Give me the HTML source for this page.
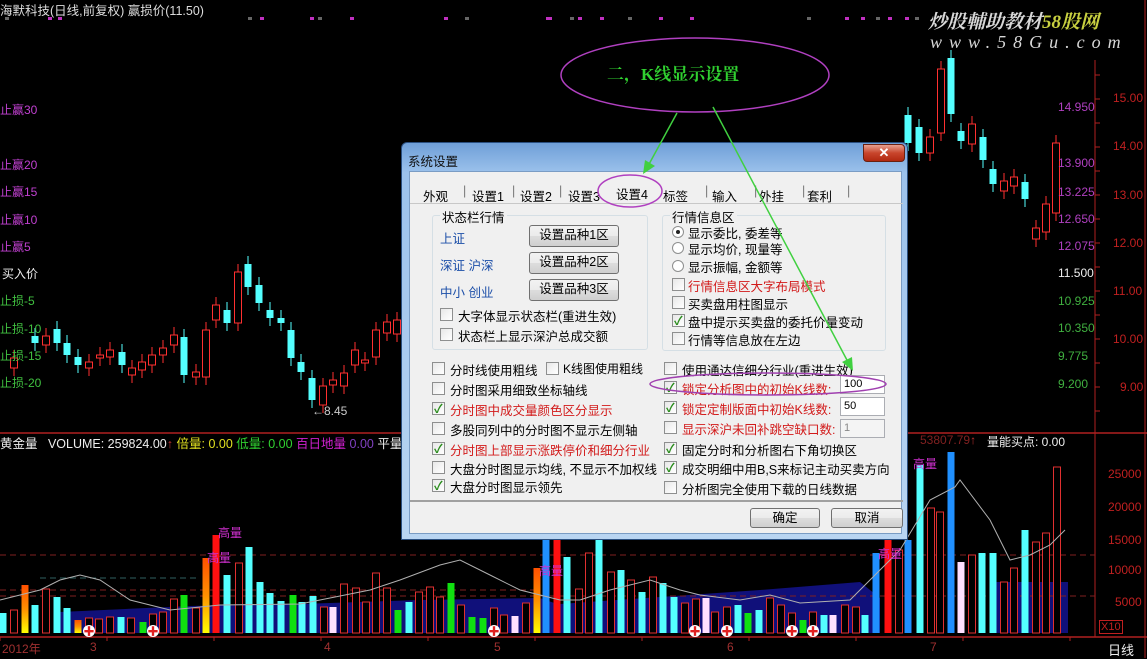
<!DOCTYPE html>
<html><head><meta charset="utf-8">
<style>
*{margin:0;padding:0;box-sizing:border-box}
body{width:1147px;height:658px;background:#000;overflow:hidden;position:relative;font-family:"Liberation Sans","Noto Sans CJK SC",sans-serif;font-size:12px}
.a{position:absolute;white-space:nowrap}
#dlg{position:absolute;left:401px;top:142px;width:507px;height:398px;background:linear-gradient(#6f9fd8,#9cc2ec 30px,#b9d5f2);border:1px solid #2a4f80;border-radius:6px 6px 0 0}
#cl{position:absolute;left:7px;top:28px;width:493px;height:363px;background:#f0f0f0;border:1px solid #7a9cc4}
.t{position:absolute;font-size:12.5px;color:#000;white-space:nowrap;font-family:"Liberation Sans","Noto Sans CJK SC",sans-serif}
.r{color:#d21a1a}
.b{color:#1b4ea8}
.cb{position:absolute;width:13px;height:13px;border:1px solid #8e8f8f;background:linear-gradient(135deg,#e8e8e8,#fff)}
.cb.k::after{content:"✓";position:absolute;left:1px;top:-3px;font-size:12px;color:#2a8c1c;font-weight:bold}
.rd{position:absolute;width:12px;height:12px;border:1px solid #8e8f8f;border-radius:50%;background:#fff}
.rd.k::after{content:"";position:absolute;left:3px;top:3px;width:4px;height:4px;border-radius:50%;background:#222}
.btn{position:absolute;border:1px solid #707070;border-radius:3px;background:linear-gradient(#f2f2f2,#ebebeb 50%,#dddddd 51%,#cfcfcf);text-align:center;font-size:12.5px;line-height:19px}
.grp{position:absolute;border:1px solid #d5dfe5;border-radius:3px}
.gt{position:absolute;top:-9px;left:7px;background:#f0f0f0;padding:0 2px;font-size:12.5px}
.inp{position:absolute;border:1px solid #abadb3;background:#fff;font-size:11px;padding-left:3px;line-height:17px}
</style></head><body>
<svg id="s" width="1147" height="658" style="position:absolute;left:0;top:0"></svg>

<div class="a" style="left:0;top:0;color:#ddd;font-size:12.5px">海默科技(日线,前复权) 赢损价(11.50)</div>
<div class="a" style="left:0;top:101px;color:#c040d0">止赢30</div>
<div class="a" style="left:0;top:156px;color:#c040d0">止赢20</div>
<div class="a" style="left:0;top:183px;color:#c040d0">止赢15</div>
<div class="a" style="left:0;top:211px;color:#c040d0">止赢10</div>
<div class="a" style="left:0;top:238px;color:#c040d0">止赢5</div>
<div class="a" style="left:2px;top:265px;color:#eee">买入价</div>
<div class="a" style="left:0;top:292px;color:#40c040">止损-5</div>
<div class="a" style="left:0;top:320px;color:#40c040">止损-10</div>
<div class="a" style="left:0;top:347px;color:#40c040">止损-15</div>
<div class="a" style="left:0;top:374px;color:#40c040">止损-20</div>
<div class="a" style="left:312px;top:404px;color:#ccc">←8.45</div>

<div class="a" style="left:1058px;top:100px;color:#b040c0">14.950</div>
<div class="a" style="left:1058px;top:156px;color:#b040c0">13.900</div>
<div class="a" style="left:1058px;top:185px;color:#b040c0">13.225</div>
<div class="a" style="left:1058px;top:212px;color:#b040c0">12.650</div>
<div class="a" style="left:1058px;top:239px;color:#b040c0">12.075</div>
<div class="a" style="left:1058px;top:266px;color:#eee">11.500</div>
<div class="a" style="left:1058px;top:294px;color:#40b040">10.925</div>
<div class="a" style="left:1058px;top:321px;color:#40b040">10.350</div>
<div class="a" style="left:1058px;top:349px;color:#40b040">9.775</div>
<div class="a" style="left:1058px;top:377px;color:#40b040">9.200</div>

<div class="a" style="left:1113px;top:91px;color:#c02020">15.00</div>
<div class="a" style="left:1113px;top:139px;color:#c02020">14.00</div>
<div class="a" style="left:1113px;top:188px;color:#c02020">13.00</div>
<div class="a" style="left:1113px;top:236px;color:#c02020">12.00</div>
<div class="a" style="left:1113px;top:284px;color:#c02020">11.00</div>
<div class="a" style="left:1113px;top:332px;color:#c02020">10.00</div>
<div class="a" style="left:1120px;top:380px;color:#c02020">9.00</div>

<div class="a" style="left:1108px;top:467px;color:#c02020">25000</div>
<div class="a" style="left:1108px;top:500px;color:#c02020">20000</div>
<div class="a" style="left:1108px;top:533px;color:#c02020">15000</div>
<div class="a" style="left:1108px;top:563px;color:#c02020">10000</div>
<div class="a" style="left:1115px;top:595px;color:#c02020">5000</div>
<div class="a" style="left:1099px;top:620px;color:#c02020;border:1px solid #c02020;padding:0 1px;font-size:11px">X10</div>
<div class="a" style="left:1108px;top:640px;color:#eee;font-size:13px">日线</div>

<div class="a" style="left:0;top:433px;font-size:12.5px"><span style="color:#eee">黄金量</span>&nbsp;&nbsp;&nbsp;<span style="color:#eee">VOLUME: 259824.00</span><span style="color:#c03030">↑</span> <span style="color:#e0e020">倍量: 0.00</span> <span style="color:#30d030">低量: 0.00</span> <span style="color:#d020d0">百日地量</span> <span style="color:#8040c0">0.00</span> <span style="color:#eee">平量</span></div>
<div class="a" style="left:920px;top:433px;color:#802020">53807.79<span style="color:#c03030">↑</span></div>
<div class="a" style="left:987px;top:433px;color:#eee">量能买点: 0.00</div>

<div class="a" style="left:2px;top:640px;color:#a03030">2012年</div>
<div class="a" style="left:90px;top:640px;color:#a03030">3</div>
<div class="a" style="left:324px;top:640px;color:#a03030">4</div>
<div class="a" style="left:494px;top:640px;color:#a03030">5</div>
<div class="a" style="left:727px;top:640px;color:#a03030">6</div>
<div class="a" style="left:930px;top:640px;color:#a03030">7</div>

<div class="a" style="left:218px;top:524px;color:#d030d0">高量</div>
<div class="a" style="left:207px;top:549px;color:#d030d0">高量</div>
<div class="a" style="left:539px;top:562px;color:#d030d0">高量</div>
<div class="a" style="left:878px;top:545px;color:#d030d0">高量</div>
<div class="a" style="left:913px;top:455px;color:#d030d0">高量</div>

<div class="a" style="left:928px;top:7px;color:#d8d8d8;font-size:19px;font-style:italic;font-weight:bold;font-family:'Liberation Serif','Noto Serif CJK SC',serif">炒股輔助教材<span style="color:#c8d040">58股网</span></div>
<div class="a" style="left:930px;top:32px;color:#d8d8d8;font-size:18px;font-style:italic;letter-spacing:7px;font-family:'Liberation Serif',serif">www.58Gu.com</div>

<div class="a" style="left:607px;top:60px;color:#30d030;font-size:17px;font-weight:bold;font-family:'Liberation Serif','Noto Serif CJK SC',serif">二，K线显示设置</div>

<div id="dlg">
 <div class="t" style="left:6px;top:8px;color:#111">系统设置</div>
 <div style="position:absolute;left:461px;top:1px;width:42px;height:18px;border-radius:0 4px 4px 4px;background:linear-gradient(#e8a090,#c8452c 50%,#b02810);border:1px solid #6a2010;color:#fff;text-align:center;font-weight:bold;font-size:13px;line-height:16px">✕</div>
 <div id="cl">
  <div class="t" style="left:13px;top:14px">外观</div><div class="t" style="left:53px;top:12px;color:#777">|</div>
  <div class="t" style="left:62px;top:14px">设置1</div><div class="t" style="left:102px;top:12px;color:#777">|</div>
  <div class="t" style="left:110px;top:14px">设置2</div><div class="t" style="left:149px;top:12px;color:#777">|</div>
  <div class="t" style="left:158px;top:14px">设置3</div>
  <div class="t" style="left:206px;top:12px">设置4</div>
  <div class="t" style="left:253px;top:14px">标签</div><div class="t" style="left:295px;top:12px;color:#777">|</div>
  <div class="t" style="left:302px;top:14px">输入</div><div class="t" style="left:344px;top:12px;color:#777">|</div>
  <div class="t" style="left:349px;top:14px">外挂</div><div class="t" style="left:392px;top:12px;color:#777">|</div>
  <div class="t" style="left:397px;top:14px">套利</div><div class="t" style="left:437px;top:12px;color:#777">|</div>
  <div style="position:absolute;left:0;top:31px;width:493px;height:299px;border-top:1px solid #c8c8c8;border-bottom:2px solid #a0a0a0"></div>

  <div class="grp" style="left:22px;top:43px;width:216px;height:135px"><div class="gt">状态栏行情</div></div>
  <div class="t b" style="left:30px;top:56px">上证</div>
  <div class="t b" style="left:30px;top:83px">深证 沪深</div>
  <div class="t b" style="left:30px;top:110px">中小 创业</div>
  <div class="btn" style="left:119px;top:53px;width:90px;height:22px">设置品种1区</div>
  <div class="btn" style="left:119px;top:80px;width:90px;height:22px">设置品种2区</div>
  <div class="btn" style="left:119px;top:107px;width:90px;height:22px">设置品种3区</div>
  <div class="cb" style="left:30px;top:136px"></div><div class="t" style="left:48px;top:134px">大字体显示状态栏(重进生效)</div>
  <div class="cb" style="left:30px;top:156px"></div><div class="t" style="left:48px;top:154px">状态栏上显示深沪总成交额</div>

  <div class="grp" style="left:252px;top:43px;width:224px;height:136px"><div class="gt">行情信息区</div></div>
  <div class="rd k" style="left:262px;top:54px"></div><div class="t" style="left:278px;top:51px">显示委比, 委差等</div>
  <div class="rd" style="left:262px;top:70px"></div><div class="t" style="left:278px;top:67px">显示均价, 现量等</div>
  <div class="rd" style="left:262px;top:88px"></div><div class="t" style="left:278px;top:85px">显示振幅, 金额等</div>
  <div class="cb" style="left:262px;top:106px"></div><div class="t r" style="left:278px;top:104px">行情信息区大字布局模式</div>
  <div class="cb" style="left:262px;top:124px"></div><div class="t" style="left:278px;top:122px">买卖盘用柱图显示</div>
  <div class="cb k" style="left:262px;top:142px"></div><div class="t" style="left:278px;top:140px">盘中提示买卖盘的委托价量变动</div>
  <div class="cb" style="left:262px;top:160px"></div><div class="t" style="left:278px;top:158px">行情等信息放在左边</div>

  <div class="cb" style="left:22px;top:190px"></div><div class="t" style="left:40px;top:188px">分时线使用粗线</div>
  <div class="cb" style="left:136px;top:190px"></div><div class="t" style="left:153px;top:188px;font-size:12px">K线图使用粗线</div>
  <div class="cb" style="left:22px;top:210px"></div><div class="t" style="left:40px;top:208px">分时图采用细致坐标轴线</div>
  <div class="cb k" style="left:22px;top:230px"></div><div class="t r" style="left:40px;top:228px">分时图中成交量颜色区分显示</div>
  <div class="cb" style="left:22px;top:250px"></div><div class="t" style="left:40px;top:248px">多股同列中的分时图不显示左侧轴</div>
  <div class="cb k" style="left:22px;top:270px"></div><div class="t r" style="left:40px;top:268px">分时图上部显示涨跌停价和细分行业</div>
  <div class="cb" style="left:22px;top:289px"></div><div class="t" style="left:40px;top:287px">大盘分时图显示均线, 不显示不加权线</div>
  <div class="cb k" style="left:22px;top:307px"></div><div class="t" style="left:40px;top:305px">大盘分时图显示领先</div>

  <div class="cb" style="left:254px;top:190px"></div><div class="t" style="left:272px;top:188px">使用通达信细分行业(重进生效)</div>
  <div class="cb k" style="left:254px;top:209px"></div><div class="t r" style="left:272px;top:207px">锁定分析图中的初始K线数:</div>
  <div class="inp" style="left:430px;top:203px;width:45px;height:19px">100</div>
  <div class="cb k" style="left:254px;top:229px"></div><div class="t r" style="left:272px;top:227px">锁定定制版面中初始K线数:</div>
  <div class="inp" style="left:430px;top:225px;width:45px;height:19px">50</div>
  <div class="cb" style="left:254px;top:249px"></div><div class="t r" style="left:272px;top:247px">显示深沪未回补跳空缺口数:</div>
  <div class="inp" style="left:430px;top:247px;width:45px;height:19px;color:#888;background:#f4f4f4">1</div>
  <div class="cb k" style="left:254px;top:270px"></div><div class="t" style="left:272px;top:268px">固定分时和分析图右下角切换区</div>
  <div class="cb k" style="left:254px;top:289px"></div><div class="t" style="left:272px;top:287px">成交明细中用B,S来标记主动买卖方向</div>
  <div class="cb" style="left:254px;top:309px"></div><div class="t" style="left:272px;top:307px">分析图完全使用下载的日线数据</div>

  <div class="btn" style="left:340px;top:336px;width:70px;height:20px">确定</div>
  <div class="btn" style="left:421px;top:336px;width:72px;height:20px">取消</div>
 </div>
</div>

<svg width="1147" height="658" style="position:absolute;left:0;top:0;pointer-events:none">
 <ellipse cx="695" cy="75" rx="134" ry="37" fill="none" stroke="#b040c0" stroke-width="1.5"/>
 <ellipse cx="630" cy="191" rx="32" ry="16" fill="none" stroke="#b040c0" stroke-width="1.5"/>
 <ellipse cx="768" cy="384" rx="118" ry="11" fill="none" stroke="#a040b0" stroke-width="1.5"/>
 <line x1="677" y1="113" x2="648" y2="166" stroke="#40d040" stroke-width="1.5"/>
 <polygon points="643,174 645,160 655,166" fill="#40d040"/>
 <line x1="713" y1="107" x2="848" y2="362" stroke="#40d040" stroke-width="1.5"/>
 <polygon points="853,371 842,362 852,357" fill="#40d040"/>
</svg>

<script>
var s=document.getElementById('s'),h='';
function R(x,y,w,hh,f,st){h+='<rect x="'+x+'" y="'+y+'" width="'+w+'" height="'+hh+'" fill="'+f+'"'+(st?' stroke="'+st+'"':'')+'/>';}
function L(x1,y1,x2,y2,c,d,w){h+='<line x1="'+x1+'" y1="'+y1+'" x2="'+x2+'" y2="'+y2+'" stroke="'+c+'"'+(d?' stroke-dasharray="'+d+'"':'')+' stroke-width="'+(w||1)+'"/>';}
[[100,'#803060'],[155,'#803060'],[183,'#803060'],[211,'#303060'],[239,'#803060'],[266,'#cccccc'],[294,'#604040'],[322,'#804040'],[350,'#804040'],[377,'#a04040']].forEach(function(a){L(0,a[1],1058,a[1],a[0],'4,3');});
L(1095,60,1095,437,'#b02020');L(1145,0,1145,658,'#b02020');L(0,433,1147,433,'#b02020',0,1.5);L(0,637,1147,637,'#b02020',0,1.5);
L(1095,437,1095,637,'#b02020');
for(var y=75;y<430;y+=24)L(1095,y,1100,y,'#b02020');
[5,48,58,248,260,310,318,350,444,465,546,548,570,578,600,628,659,690,807,845,861,876,888,905,915].forEach(function(x,i){R(x,17,4,3,i%3?'#c030c0':'#666');});
var C=[[14,358,368,'r'],[35,336,343,'c'],[46,336,345,'r'],[57,329,343,'c'],[67,343,355,'c'],[78,357,365,'c'],[89,362,368,'r'],[100,355,358,'r'],[110,350,357,'r'],[122,352,365,'c'],[132,368,375,'r'],[142,362,370,'r'],[152,355,365,'r'],[163,348,355,'r'],[174,335,345,'r'],[184,337,375,'c'],[196,372,377,'r'],[206,330,377,'r'],[216,305,320,'r'],[227,310,323,'c'],[238,272,323,'r'],[248,264,287,'c'],[259,285,303,'c'],[270,310,318,'c'],[281,318,323,'c'],[291,330,358,'c'],[301,362,372,'c'],[312,378,400,'c'],[323,386,405,'r'],[333,380,385,'r'],[344,373,386,'r'],[355,350,365,'r'],[365,360,363,'r'],[376,330,357,'r'],[387,322,333,'r'],[397,320,334,'r'],
[908,115,143,'c'],[919,127,153,'c'],[930,137,153,'r'],[941,69,133,'r'],[951,58,114,'c'],[961,131,141,'c'],[972,124,144,'r'],[983,137,160,'c'],[993,169,184,'c'],[1004,181,191,'r'],[1014,177,186,'r'],[1025,182,199,'c'],[1036,228,239,'r'],[1046,204,232,'r'],[1056,143,213,'r']];
C.forEach(function(c){var col=c[3]=='c'?'#54ffff':'#ff3030';L(c[0],c[1]-8,c[0],c[2]+8,col);if(c[3]=='c')R(c[0]-3.5,c[1],7,c[2]-c[1],col);else R(c[0]-3.5,c[1],7,c[2]-c[1],'#000',col);});
h+='<polygon points="60,612 190,606 300,604 420,600 540,598 560,605 560,633 60,633" fill="#10107a"/>';
h+='<polygon points="560,604 760,590 860,582 880,598 880,633 560,633" fill="#10107a"/>';
h+='<polygon points="990,582 1068,582 1068,633 990,633" fill="#10107a"/>';
L(0,555,1095,555,'#802020','6,4');L(0,590,540,590,'#802020','6,4');L(0,596,1095,596,'#802020','6,4');L(40,578,200,578,'#306060','6,4');
var V=[[3,613,'c'],[14,610,'r'],[25,585,'o'],[35,605,'c'],[46,589,'r'],[57,597,'c'],[67,608,'c'],[78,620,'o'],[89,618,'r'],[99,619,'r'],[110,617,'r'],[121,617,'c'],[131,618,'r'],[143,622,'g'],[153,614,'r'],[163,612,'r'],[174,599,'r'],[184,595,'g'],[196,608,'r'],[206,558,'o'],[216,535,'R'],[227,575,'c'],[239,563,'r'],[249,547,'c'],[260,582,'c'],[270,593,'c'],[281,601,'c'],[293,595,'g'],[302,602,'c'],[313,596,'c'],[324,607,'r'],[333,607,'w'],[344,584,'r'],[356,588,'r'],[366,602,'r'],[376,573,'r'],[387,588,'r'],[398,610,'g'],[409,602,'c'],[419,592,'r'],[430,587,'r'],[440,597,'r'],[451,583,'g'],[461,605,'r'],[472,617,'g'],[483,618,'g'],[494,608,'r'],[504,615,'r'],[515,616,'w'],[526,603,'r'],[537,568,'o'],[546,540,'b'],[557,540,'R'],[567,557,'c'],[579,589,'r'],[589,553,'r'],[599,540,'c'],[611,572,'r'],[621,570,'c'],[631,580,'r'],[642,592,'c'],[653,577,'r'],[663,583,'c'],[674,597,'c'],[685,603,'r'],[696,599,'r'],[706,598,'w'],[715,612,'r'],[727,607,'r'],[738,605,'c'],[748,613,'g'],[759,610,'c'],[770,598,'r'],[781,605,'r'],[792,613,'r'],[803,620,'g'],[813,612,'r'],[824,615,'c'],[833,615,'w'],[845,605,'r'],[856,607,'r'],[865,615,'c'],[876,553,'b'],[888,540,'R'],[899,550,'r'],[908,540,'b'],[920,465,'c'],[931,508,'r'],[940,512,'r'],[951,452,'b'],[961,562,'w'],[972,555,'r'],[982,553,'c'],[993,553,'c'],[1004,582,'r'],[1014,568,'r'],[1025,530,'c'],[1036,542,'r'],[1046,533,'r'],[1057,467,'r']];
h+='<defs><linearGradient id="og" x1="0" y1="1" x2="0" y2="0"><stop offset="0" stop-color="#ffff00"/><stop offset="0.5" stop-color="#ff9000"/><stop offset="1" stop-color="#ff5000"/></linearGradient></defs>';
V.forEach(function(v){var x=v[0]-3.5,y=v[1],hh=633-v[1],t=v[2];
 if(t=='r')R(x,y,7,hh,'#000','#e03030');else R(x,y,7,hh,{c:'#54ffff',g:'#10e010',o:'url(#og)',w:'#ffe0ff',b:'#2090ff',R:'#ff1010'}[t]);});
h+='<polyline points="0,600 40,590 60,580 80,575 100,580 130,600 170,610 220,605 300,604 370,590 400,580 440,565 460,560 490,575 520,590 560,600 580,600 610,590 650,580 680,590 700,595 740,600 770,595 800,603 850,600 870,580 900,550 930,500 955,487 960,480 990,520 1010,560 1030,555 1050,545 1065,530" fill="none" stroke="#b0b0b0" stroke-width="1"/>';
[89,153,494,695,727,792,813].forEach(function(x){h+='<circle cx="'+x+'" cy="631" r="6" fill="#fff"/><text x="'+x+'" y="635" font-size="11" fill="#e02020" text-anchor="middle" font-weight="bold">✚</text>';});
for(var x=0;x<1095;x+=107)L(x,637,x,641,'#b02020');
s.innerHTML=h;
</script>
</body></html>
